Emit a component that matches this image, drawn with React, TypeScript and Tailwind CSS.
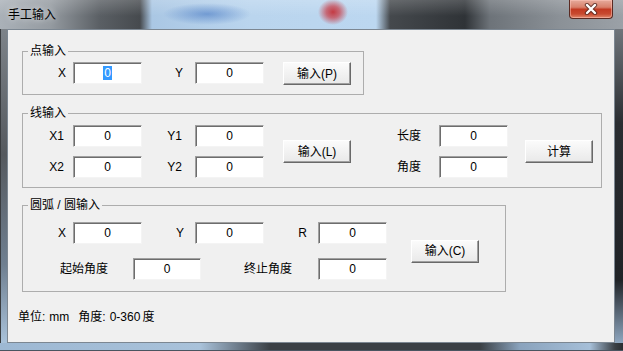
import type { ReactNode } from "react";

function Label({ className, children }: { className: string; children: ReactNode }) {
  return <div className={`h-[22px] leading-[22px] whitespace-nowrap ${className}`}>{children}</div>;
}

function Edit({ className = "w-[69px]", selected = false }: { className?: string; selected?: boolean }) {
  return (
    <div
      className={`${className} h-[22px] shrink-0 bg-white border border-[#a0a0a0] border-r-[#f4f4f4] border-b-[#f4f4f4] shadow-[inset_1px_1px_0_#6d6d6d] flex items-center justify-center`}
    >
      {selected ? (
        <span className="bg-[#3399ff] text-white leading-[14px] px-[1px]">0</span>
      ) : (
        <span className="leading-[14px]">0</span>
      )}
    </div>
  );
}

function Btn({ className, children }: { className: string; children: ReactNode }) {
  return (
    <button
      className={`${className} w-[68px] h-[23px] shrink-0 border border-t-white border-l-white border-r-[#696969] border-b-[#696969] shadow-[inset_-1px_-1px_0_#a0a0a0] bg-[linear-gradient(#fbfbfb,#e9e9e9)] leading-[14px] text-black`}
    >
      {children}
    </button>
  );
}

function Group({ title, className, children }: { title: string; className: string; children: ReactNode }) {
  return (
    <fieldset className={`ml-[14px] border border-[#adadad] ${className}`}>
      <legend className="ml-[5px] px-[2px] leading-[14px]">{title}</legend>
      {children}
    </fieldset>
  );
}

export default function App() {
  return (
    <div className="w-[623px] h-[351px] flex flex-col overflow-hidden text-[12px] text-black font-['Liberation_Sans','Noto_Sans_CJK_SC',sans-serif]">
      {/* Title bar (glass) */}
      <div className="h-[29px] shrink-0 flex items-start bg-[image:radial-gradient(15px_13px_at_333px_12px,rgba(196,50,58,0.95)_0%,rgba(200,60,70,0.7)_45%,rgba(200,60,70,0)_100%),radial-gradient(44px_11px_at_207px_14px,rgba(70,120,195,0.6),rgba(80,130,200,0)),linear-gradient(to_bottom,rgba(255,255,255,0.18),rgba(255,255,255,0)_55%),linear-gradient(to_right,#aab1b8_0px,#959ba1_50px,#5a5f64_100px,#464a4e_140px,#aac7e4_152px,#bad5ee_250px,#bcd7f0_376px,#45494d_390px,#2f3337_465px,#6d7379_490px,#8b9197_560px,#9ba1a7_623px)]">
        <span className="pl-[8px] pt-[8px] leading-[14px] [text-shadow:0_0_6px_rgba(255,255,255,0.9)]">手工输入</span>
        <div className="ml-auto mr-[10px] w-[44px] h-[19px] rounded-b-[4px] border border-t-0 border-[#5a2a22] shadow-[inset_0_0_0_1px_rgba(255,200,190,0.5)] bg-[linear-gradient(#e6ab9c_0%,#d8806b_40%,#c23a22_52%,#c84a30_78%,#e0896c_100%)] flex items-center justify-center">
          <svg width="14" height="12" viewBox="0 0 14 12">
            <path d="M3 2 L11 10 M11 2 L3 10" stroke="#4b2620" strokeOpacity="0.75" strokeWidth="4.4" strokeLinecap="round" />
            <path d="M3 2 L11 10 M11 2 L3 10" stroke="#ffffff" strokeWidth="2.4" strokeLinecap="round" />
          </svg>
        </div>
      </div>

      <div className="flex flex-1">
        <div className="w-[7px] bg-[linear-gradient(to_bottom,#7d8389,#55595e_40%,#6f7f90_75%,#a9c2da_100%)] shadow-[inset_1px_0_0_#3a3d40]" />

        {/* Client area */}
        <div className="w-[608px] border border-[#7c8792] bg-[#f0f0f0] flex flex-col">
          {/* 点输入 */}
          <Group title="点输入" className="mt-[14px] w-[342px]">
            <div className="flex items-start pt-[4px] pb-[9px]">
              <Label className="w-[43px] text-right mr-[7px]">X</Label>
              <Edit selected />
              <Label className="w-[41px] text-right mr-[12px]">Y</Label>
              <Edit />
              <Btn className="ml-[19px]">输入(P)</Btn>
            </div>
          </Group>

          {/* 线输入 */}
          <Group title="线输入" className="mt-[11px] w-[580px]">
            <div className="flex items-center pt-[5px] pb-[9px]">
              <div className="flex flex-col gap-[9px]">
                <div className="flex">
                  <Label className="w-[41px] text-right mr-[9px]">X1</Label>
                  <Edit />
                  <Label className="w-[40px] text-right mr-[13px]">Y1</Label>
                  <Edit />
                </div>
                <div className="flex">
                  <Label className="w-[41px] text-right mr-[9px]">X2</Label>
                  <Edit />
                  <Label className="w-[40px] text-right mr-[13px]">Y2</Label>
                  <Edit />
                </div>
              </div>
              <Btn className="ml-[19px]">输入(L)</Btn>
              <div className="ml-[46px] flex flex-col gap-[9px]">
                <div className="flex">
                  <Label className="w-[42px]">长度</Label>
                  <Edit />
                </div>
                <div className="flex">
                  <Label className="w-[42px]">角度</Label>
                  <Edit />
                </div>
              </div>
              <Btn className="ml-[17px]">计算</Btn>
            </div>
          </Group>

          {/* 圆弧 / 圆输入 */}
          <Group title="圆弧 / 圆输入" className="mt-[10px] w-[484px]">
            <div className="flex items-center pt-[10px] pb-[11px]">
              <div className="flex flex-col gap-[14px]">
                <div className="flex">
                  <Label className="w-[43px] text-right mr-[7px]">X</Label>
                  <Edit />
                  <Label className="w-[42px] text-right mr-[11px]">Y</Label>
                  <Edit />
                  <Label className="w-[43px] text-right mr-[11px]">R</Label>
                  <Edit />
                </div>
                <div className="flex">
                  <Label className="w-[85px] text-right mr-[25px]">起始角度</Label>
                  <Edit className="w-[68px]" />
                  <Label className="w-[91px] text-right mr-[26px]">终止角度</Label>
                  <Edit />
                </div>
              </div>
              <Btn className="ml-[24px]">输入(C)</Btn>
            </div>
          </Group>

          {/* Footer */}
          <div className="ml-[10px] mt-[18px] flex leading-[14px] whitespace-nowrap">
            <span>单位:</span>
            <span className="ml-[4px]">mm</span>
            <span className="ml-[9px]">角度:</span>
            <span className="ml-[4px]">0-360</span>
            <span className="ml-[2px]">度</span>
          </div>
        </div>

        <div className="flex-1 bg-[linear-gradient(to_bottom,#6f757b,#2a2d31_30%,#202327_80%,#8ea6bf_100%)]" />
      </div>

      <div className="h-[8px] shrink-0 bg-[linear-gradient(to_right,#9db8d3_0px,#a9c2da_200px,#6a7886_240px,#3b4045_270px,#3b4045_480px,#8aa3bd_520px,#a6bfd8_590px,#3a3f44_615px,#2a2d31_623px)] shadow-[inset_0_-1px_0_#4a5560]" />
    </div>
  );
}
